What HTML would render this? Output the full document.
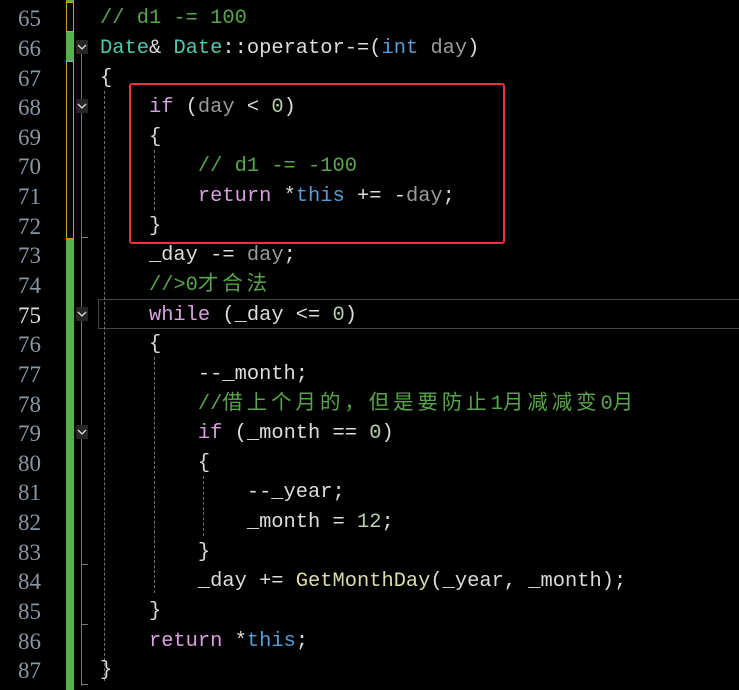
<!DOCTYPE html>
<html><head><meta charset="utf-8"><style>
body{margin:0;background:#000;width:739px;height:690px;overflow:hidden;position:relative;font-family:"Liberation Mono","Noto Sans CJK SC",monospace;}
.l{position:absolute;left:100px;height:29.64px;line-height:29.64px;font-size:20.4px;white-space:pre;color:#dcdcdc;margin-top:2px}
.n{position:absolute;left:0;width:41px;text-align:right;height:29.64px;line-height:29.64px;font-size:23px;font-family:"Liberation Serif",serif;color:#8a96a2;margin-top:2px}
.c{color:#57a64a}.k{color:#d8a0df}.t{color:#4ec9b0}.b{color:#569cd6}.p{color:#9a9a9a}.f{color:#dcdcaa}.num{color:#b5cea8}.o{color:#b4b4b4}
.cj{letter-spacing:4px}
.abs{position:absolute}
.dash{position:absolute;width:0;border-left:1px dashed #707070}
.fold{position:absolute;left:76px;width:12px;height:14px;background:#262626}
</style></head><body>
<div class="abs" style="left:66px;top:0;width:8px;height:690px;background:#57b14e"></div>
<div class="abs" style="left:66px;top:2px;width:6px;height:28px;background:#000;border:1px solid #d4a017"></div>
<div class="abs" style="left:66px;top:61px;width:6px;height:176px;background:#000;border:1px solid #d4a017"></div>
<div class="abs" style="left:81px;top:50px;width:1px;height:636px;background:#777"></div>
<div class="abs" style="left:81px;top:237px;width:7px;height:1px;background:#777"></div>
<div class="abs" style="left:81px;top:564px;width:7px;height:1px;background:#777"></div>
<div class="abs" style="left:81px;top:624px;width:7px;height:1px;background:#777"></div>
<div class="abs" style="left:81px;top:684px;width:7px;height:1px;background:#777"></div>
<svg class="fold" style="top:40px" viewBox="0 0 12 14"><path d="M2 5l4 4 4-4" stroke="#ddd" stroke-width="1.3" fill="none"/></svg>
<svg class="fold" style="top:99px" viewBox="0 0 12 14"><path d="M2 5l4 4 4-4" stroke="#ddd" stroke-width="1.3" fill="none"/></svg>
<svg class="fold" style="top:307px" viewBox="0 0 12 14"><path d="M2 5l4 4 4-4" stroke="#ddd" stroke-width="1.3" fill="none"/></svg>
<svg class="fold" style="top:425px" viewBox="0 0 12 14"><path d="M2 5l4 4 4-4" stroke="#ddd" stroke-width="1.3" fill="none"/></svg>
<div class="abs" style="left:98px;top:299px;width:650px;height:28px;border:1px solid #464646"></div>
<div class="dash" style="left:104px;top:91px;height:590px"></div>
<div class="dash" style="left:154px;top:150px;height:60px"></div>
<div class="dash" style="left:154px;top:357px;height:236px"></div>
<div class="dash" style="left:203px;top:476px;height:60px"></div>
<div class="abs" style="left:129px;top:83px;width:372px;height:157px;border:2px solid #e8333b;border-radius:3px"></div>

<div class="n" style="top:2.2px">65</div><div class="l" style="top:2.2px"><span class="c">// d1 -= 100</span></div>
<div class="n" style="top:31.8px">66</div><div class="l" style="top:31.8px"><span class="t">Date</span>&amp; <span class="t">Date</span>::operator-=(<span class="b">int</span> <span class="p">day</span>)</div>
<div class="n" style="top:61.5px">67</div><div class="l" style="top:61.5px">{</div>
<div class="n" style="top:91.1px">68</div><div class="l" style="top:91.1px">    <span class="k">if</span> (<span class="p">day</span> &lt; <span class="num">0</span>)</div>
<div class="n" style="top:120.8px">69</div><div class="l" style="top:120.8px">    {</div>
<div class="n" style="top:150.4px">70</div><div class="l" style="top:150.4px">        <span class="c">// d1 -= -100</span></div>
<div class="n" style="top:180.0px">71</div><div class="l" style="top:180.0px">        <span class="k">return</span> *<span class="b">this</span> += -<span class="p">day</span>;</div>
<div class="n" style="top:209.7px">72</div><div class="l" style="top:209.7px">    }</div>
<div class="n" style="top:239.3px">73</div><div class="l" style="top:239.3px">    _day -= <span class="p">day</span>;</div>
<div class="n" style="top:269.0px">74</div><div class="l" style="top:269.0px">    <span class="c">//&gt;0<span class="cj">才合法</span></span></div>
<div class="n" style="top:298.6px;color:#e0e0e0">75</div><div class="l" style="top:298.6px">    <span class="k">while</span> (_day &lt;= <span class="num">0</span>)</div>
<div class="n" style="top:328.2px">76</div><div class="l" style="top:328.2px">    {</div>
<div class="n" style="top:357.9px">77</div><div class="l" style="top:357.9px">        --_month;</div>
<div class="n" style="top:387.5px">78</div><div class="l" style="top:387.5px">        <span class="c">//<span class="cj">借上个月的，但是要防止</span>1<span class="cj">月减减变</span>0<span class="cj">月</span></span></div>
<div class="n" style="top:417.2px">79</div><div class="l" style="top:417.2px">        <span class="k">if</span> (_month == <span class="num">0</span>)</div>
<div class="n" style="top:446.8px">80</div><div class="l" style="top:446.8px">        {</div>
<div class="n" style="top:476.4px">81</div><div class="l" style="top:476.4px">            --_year;</div>
<div class="n" style="top:506.1px">82</div><div class="l" style="top:506.1px">            _month = <span class="num">12</span>;</div>
<div class="n" style="top:535.7px">83</div><div class="l" style="top:535.7px">        }</div>
<div class="n" style="top:565.4px">84</div><div class="l" style="top:565.4px">        _day += <span class="f">GetMonthDay</span>(_year, _month);</div>
<div class="n" style="top:595.0px">85</div><div class="l" style="top:595.0px">    }</div>
<div class="n" style="top:624.6px">86</div><div class="l" style="top:624.6px">    <span class="k">return</span> *<span class="b">this</span>;</div>
<div class="n" style="top:654.3px">87</div><div class="l" style="top:654.3px">}</div>
</body></html>
